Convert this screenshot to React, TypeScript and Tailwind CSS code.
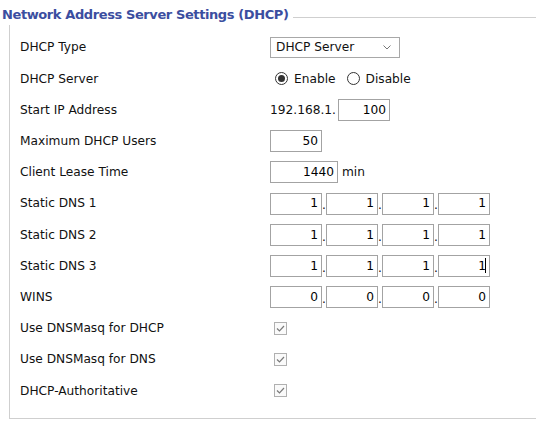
import React from 'react'

const font = { fontFamily: '"DejaVu Sans", Tahoma, Verdana, sans-serif' }

function Box({ value, w = 'w-[52px]', caret }: { value: string; w?: string; caret?: boolean }) {
  return (
    <span className={`${w} h-[22px] border border-[#a3a3a3] bg-white flex items-center justify-end pr-[3px] text-black`}>
      {value}
      {caret && <span className="w-px h-[15px] bg-black ml-[-1px]" />}
    </span>
  )
}

function Ip({ parts, caret }: { parts: string[]; caret?: boolean }) {
  return (
    <div className="flex items-end">
      {parts.map((p, i) => (
        <React.Fragment key={i}>
          <Box value={p} caret={caret && i === parts.length - 1} />
          {i < parts.length - 1 && <span className="w-[4px] leading-none pb-[3px]">.</span>}
        </React.Fragment>
      ))}
    </div>
  )
}

function Radio({ checked }: { checked?: boolean }) {
  return (
    <span className="w-[13px] h-[13px] rounded-full border border-[#333] bg-white flex items-center justify-center">
      {checked && <span className="w-[7px] h-[7px] rounded-full bg-[#333]" />}
    </span>
  )
}

function Check() {
  return (
    <span className="w-[13px] h-[13px] border border-[#b0b0b0] bg-[#fafafa] flex items-center justify-center">
      <svg width="9" height="9" viewBox="0 0 9 9">
        <path d="M1 4.5 L3.5 7 L8 2" fill="none" stroke="#7a7a7a" strokeWidth="1.2" />
      </svg>
    </span>
  )
}

function Row({ label, children }: { label: string; children?: React.ReactNode }) {
  return (
    <div className="flex items-center h-[31.2px]">
      <div className="w-[250px] shrink-0">{label}</div>
      <div className="flex items-center">{children}</div>
    </div>
  )
}

export default function App() {
  return (
    <div className="w-[536px] h-[434px] bg-white overflow-hidden text-[12.2px] text-[#111]" style={font}>
      {/* legend */}
      <div className="flex h-[25px]">
        <div className="pl-[2px] pr-[5px] pt-[8px] text-[13px] font-bold text-[#3b4ea0] leading-none tracking-[-0.4px] whitespace-nowrap">
          Network Address Server Settings (DHCP)
        </div>
        <div className="flex-1 mt-[17px] h-px bg-[#cfcfcf]" />
      </div>

      <div className="ml-[9px] border-l border-b border-[#cfcfcf] pl-[10px] pt-[7px] pb-[12px]">
        <Row label="DHCP Type">
          <span className="w-[130px] h-[21px] border border-[#a8a8a8] bg-white flex items-center justify-between pl-[5px] pr-[8px]">
            <span>DHCP Server</span>
            <svg width="8" height="5" viewBox="0 0 8 5">
              <path d="M0.5 0.5 L4 4 L7.5 0.5" fill="none" stroke="#777" strokeWidth="1" />
            </svg>
          </span>
        </Row>
        <Row label="DHCP Server">
          <span className="ml-[5px] flex items-center gap-[6px]">
            <Radio checked />
            <span>Enable</span>
          </span>
          <span className="ml-[11px] flex items-center gap-[6px]">
            <Radio />
            <span>Disable</span>
          </span>
        </Row>
        <Row label="Start IP Address">
          <span className="mr-[2px]">192.168.1.</span>
          <Box value="100" />
        </Row>
        <Row label="Maximum DHCP Users">
          <Box value="50" />
        </Row>
        <Row label="Client Lease Time">
          <Box value="1440" w="w-[68px]" />
          <span className="ml-[4px]">min</span>
        </Row>
        <Row label="Static DNS 1">
          <Ip parts={['1', '1', '1', '1']} />
        </Row>
        <Row label="Static DNS 2">
          <Ip parts={['1', '1', '1', '1']} />
        </Row>
        <Row label="Static DNS 3">
          <Ip parts={['1', '1', '1', '1']} caret />
        </Row>
        <Row label="WINS">
          <Ip parts={['0', '0', '0', '0']} />
        </Row>
        <Row label="Use DNSMasq for DHCP">
          <span className="ml-[4px]"><Check /></span>
        </Row>
        <Row label="Use DNSMasq for DNS">
          <span className="ml-[4px]"><Check /></span>
        </Row>
        <Row label="DHCP-Authoritative">
          <span className="ml-[4px]"><Check /></span>
        </Row>
      </div>
    </div>
  )
}
